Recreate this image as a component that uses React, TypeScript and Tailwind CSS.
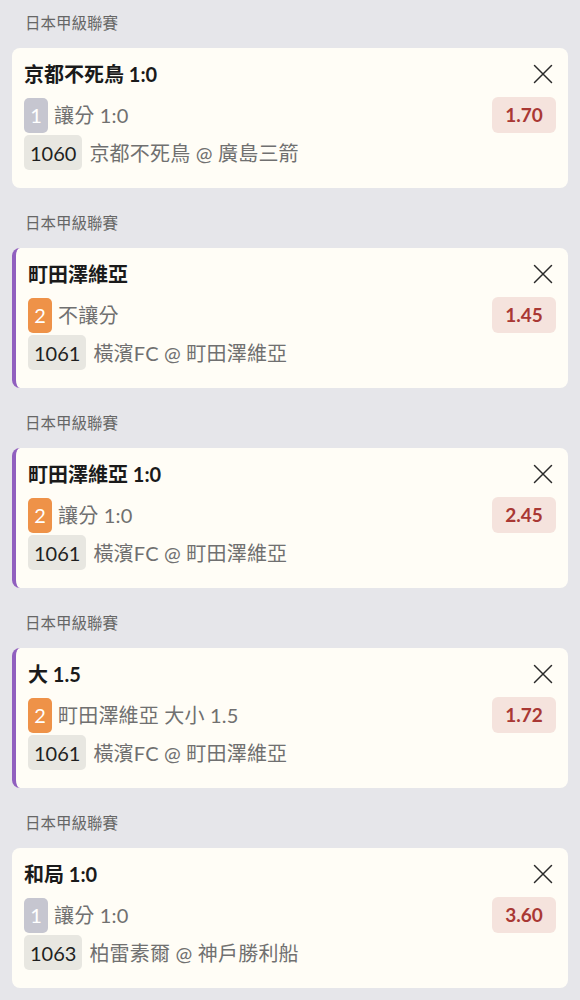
import React from 'react';

type Bet = {
  title: string;
  pick: string;
  pickTone: 'gray' | 'orange';
  market: string;
  code: string;
  match: string;
  odds: string;
  marked?: boolean;
};

const bets: Bet[] = [
  { title: '京都不死鳥 1:0', pick: '1', pickTone: 'gray', market: '讓分 1:0', code: '1060', match: '京都不死鳥 @ 廣島三箭', odds: '1.70' },
  { title: '町田澤維亞', pick: '2', pickTone: 'orange', market: '不讓分', code: '1061', match: '橫濱FC @ 町田澤維亞', odds: '1.45', marked: true },
  { title: '町田澤維亞 1:0', pick: '2', pickTone: 'orange', market: '讓分 1:0', code: '1061', match: '橫濱FC @ 町田澤維亞', odds: '2.45', marked: true },
  { title: '大 1.5', pick: '2', pickTone: 'orange', market: '町田澤維亞 大小 1.5', code: '1061', match: '橫濱FC @ 町田澤維亞', odds: '1.72', marked: true },
  { title: '和局 1:0', pick: '1', pickTone: 'gray', market: '讓分 1:0', code: '1063', match: '柏雷素爾 @ 神戶勝利船', odds: '3.60' },
];

const CloseIcon = () => (
  <svg width="20" height="20" viewBox="0 0 20 20" fill="none" stroke="#2a2a2a" strokeWidth="1.5" strokeLinecap="round">
    <path d="M1.5 1.5L18.5 18.5M18.5 1.5L1.5 18.5" />
  </svg>
);

const BetCard = ({ bet }: { bet: Bet }) => (
  <div
    className={`rounded-lg bg-[#fffdf6] pl-3 pr-3 pt-3 pb-[18px] ${
      bet.marked ? 'border-l-4 border-[#9160bf]' : ''
    }`}
  >
    <div className="flex h-7 items-center justify-between">
      <span className="text-[20px] font-bold text-[#1a1a1a]">{bet.title}</span>
      <span className="mr-[3px]">
        <CloseIcon />
      </span>
    </div>
    <div className="mt-[9px] flex h-9 items-center justify-between">
      <div className="flex items-center gap-[6px]">
        <span
          className={`flex h-[35px] w-6 items-center justify-center rounded-[5px] text-[20px] text-white ${
            bet.pickTone === 'orange' ? 'bg-[#ee9248]' : 'bg-[#c6c6d0]'
          }`}
        >
          {bet.pick}
        </span>
        <span className="text-[20px] tracking-[0.2px] text-[#707070]">{bet.market}</span>
      </div>
      <span className="flex h-9 w-16 items-center justify-center rounded-md bg-[#f5e3dd] text-[19px] font-bold text-[#a93834]">
        {bet.odds}
      </span>
    </div>
    <div className="mt-[2px] flex h-[35px] items-center gap-[7px]">
      <span className="flex h-[35px] items-center rounded-[5px] bg-[#e8e7e1] px-[6px] text-[20px] text-[#1f1f1f]">
        {bet.code}
      </span>
      <span className="text-[20px] tracking-[0.2px] text-[#707070]">{bet.match}</span>
    </div>
  </div>
);

export default function App() {
  return (
    <div
      className="min-h-[1000px] bg-[#e6e6ea] px-3"
      style={{ fontFamily: "Lato, 'Noto Sans CJK TC', sans-serif" }}
    >
      {bets.map((bet, i) => (
        <div key={i} className={i < bets.length - 1 ? 'mb-3' : ''}>
          <div className="flex h-12 items-center pl-[13px] text-[15.5px] text-[#666]">日本甲級聯賽</div>
          <BetCard bet={bet} />
        </div>
      ))}
    </div>
  );
}
